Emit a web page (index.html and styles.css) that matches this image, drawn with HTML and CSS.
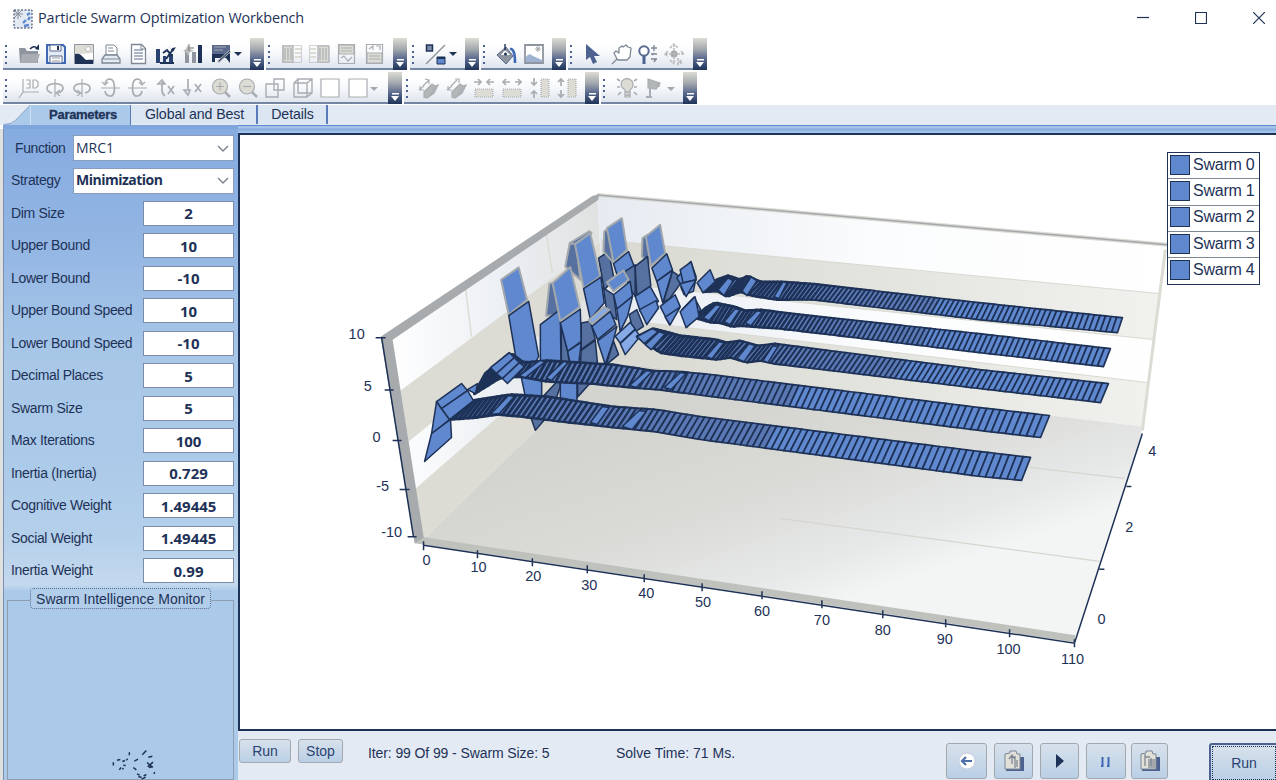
FILE: index.html
```html
<!DOCTYPE html>
<html lang="en">
<head>
<meta charset="utf-8">
<title>Particle Swarm Optimization Workbench</title>
<link rel="stylesheet" href="styles.css">
</head>
<body>
<div class="window">
  <header class="titlebar">
    <svg class="app-icon" viewBox="0 0 20 20"><rect x="1" y="1" width="18" height="18" fill="#e3eaf4" stroke="#1e3257" stroke-dasharray="2 1.5"/><path d="M5 1v9M1 5h9M2 2l6 6M8 2L2 8" stroke="#8a9098"/><path d="M10 14l3-3M14 6l3-2M11 17l5-1M15 11l2-3" stroke="#5f88cf" stroke-width="2.4"/></svg>
    <h1>Particle Swarm Optimization Workbench</h1>
    <div class="window-buttons">
      <svg viewBox="0 0 12 12"><path d="M0 5.5h12"/></svg>
      <svg viewBox="0 0 12 12"><path d="M.5.5h11v11H.5z"/></svg>
      <svg viewBox="0 0 12 12"><path d="M0 0l12 12M12 0L0 12"/></svg>
    </div>
  </header>

  <div class="toolbars">
    <div class="toolbar-row">
      <div class="strip s-file"><i class="grip"></i>
        <svg viewBox="0 0 22 22"><path d="M0 4h6l2 3h11v12H1z" fill="#8e959e"/><path d="M3 10h18l-3 9H1z" fill="#a9adb2"/><path d="M11 5q4-4 7-1" fill="none" stroke="#1e3257" stroke-width="1.6"/><path d="M16 5l4 1V0z" fill="#1e3257"/></svg>
        <svg viewBox="0 0 22 22"><path d="M1 1h16l2 2v16H1z" fill="#e3eaf4" stroke="#3f68b4" stroke-width="2"/><path d="M4 1h11v6H4zM4 12h12v7H4z" fill="#fff" stroke="#5a6a8f"/><path d="M6 14h8M6 17h8" stroke="#8e959e"/><path d="M11 2h2v4h-2z" fill="#1e3257"/></svg>
        <svg viewBox="0 0 22 22"><path d="M.5.5h19v19H.5z" fill="#dcdcd4" stroke="#8e959e"/><path d="M1 10q6-1 10 5l8 1v4H1z" fill="#1e3257"/><path d="M6 10l6 6 7-1V9z" fill="#fff"/><circle cx="14" cy="5" r="2.5" fill="#fff" stroke="#bbb"/></svg>
        <svg viewBox="0 0 22 22"><path d="M5 1h8l3 3v7H5z" fill="#fff" stroke="#7e8794"/><path d="M7 4h5M7 7h6" stroke="#7e8794"/><path d="M4 11h12l3 4v4H1v-4z" fill="#e3eaf4" stroke="#7e8794" stroke-width="1.3"/><path d="M2 15h16" stroke="#7e8794"/></svg>
        <svg viewBox="0 0 22 22"><path d="M2.500.5h10l4 4v15h-14z" fill="#fff" stroke="#7e8794" stroke-width="1.3"/><path d="M5 6h9M5 9h9M5 12h9M5 15h9" stroke="#5a6a8f"/><path d="M12 1v4h4" fill="none" stroke="#7e8794"/></svg>
        <svg viewBox="0 0 22 22"><path d="M0 5h4v14H0zM7 12h3v7H7zM13 10h4v9h-4z" fill="#2b4372"/><path d="M7 9l4-3 5 6M10 15l8-11M4 19h14" stroke="#1e3257" stroke-width="2" fill="none"/><path d="M12 1l3 4 5-2-3 5" fill="#1e3257"/></svg>
        <svg viewBox="0 0 22 22"><path d="M1 6h4v13H1zM8 8h4v11H8z" fill="#8e959e"/><path d="M14 1h4v18h-4z" fill="#1e3257"/><path d="M4 1l2 4 4 2-4 1-2 4-2-4-3-1 3-2z" fill="#b9bbb8"/><path d="M5 4h5M5 0v7" stroke="#777"/></svg>
        <svg viewBox="0 0 22 22"><path d="M0 1h18v10H0z" fill="#5a6a8f"/><path d="M2 3h12M2 6h9" stroke="#a3a8ad"/><path d="M0 10h18v9l-4-5H3v4H0z" fill="#1e3257"/><path d="M6 18L18 7" stroke="#a3a8ad" stroke-width="2.6"/><path d="M7 17L18 7" stroke="#1e3257"/></svg>
        <b class="caret"></b><i class="cap"></i></div>
      <div class="strip s-align"><i class="grip"></i>
        <svg class="dim" viewBox="0 0 22 22"><path d="M.5 1.500h19v17H.5z" stroke-dasharray="1 1"/><path class="f" d="M1 2h10v16H1z"/><path d="M3 4v12M6 4v12M9 4v12"/><path class="p" d="M13 5h6M13 9h6M13 13h6"/></svg>
        <svg class="dim" viewBox="0 0 22 22"><path d="M.5 1.500h19v17H.5z" stroke-dasharray="1 1"/><path class="f" d="M9 2h11v16H9z"/><path d="M11 4v12M14 4v12M17 4v12"/><path class="p" d="M1 5h6M1 9h6M1 13h6"/></svg>
        <svg class="dim" viewBox="0 0 22 22"><path d="M1.500.5h16v19h-16z"/><path class="f" d="M2 1h15v9H2z"/><path d="M4 4h11M4 7h11M4 14l3-2 4 5 4-4"/></svg>
        <svg class="dim" viewBox="0 0 22 22"><path d="M1.500.5h16v19h-16z"/><path class="f" d="M2 9h15v10H2z"/><path d="M4 12h11M4 15h11M4 5l4-3v4M11 2h4v4"/></svg>
        <i class="cap"></i></div>
      <div class="strip s-swap"><i class="grip"></i>
        <svg viewBox="0 0 22 22"><path d="M1.500 1h6v6h-6z" fill="#7f8da9" stroke="#1e3257" stroke-width="1.500"/><path d="M1 20L20 1" stroke="#8e959e" stroke-width="1.400"/><path d="M12 13h8v7h-8z" fill="#5f88cf" stroke="#1e3257"/><path d="M12 14h8" stroke="#1e3257" stroke-width="2"/></svg>
        <b class="caret"></b><i class="cap"></i></div>
      <div class="strip s-fill"><i class="grip"></i>
        <svg viewBox="0 0 22 22"><path d="M1 11l9-8 7 9-7 8z" fill="#8e959e" stroke="#5a6a8f"/><path d="M9 0v10" stroke="#1e3257" stroke-width="1.400"/><path d="M5 11l4-5 5 5z" fill="#fff"/><path d="M14 5q5-1 5 14" stroke="#3f68b4" stroke-width="2.600" fill="none"/><circle cx="9.500" cy="10" r="1.500" fill="#1e3257"/></svg>
        <svg viewBox="0 0 22 22"><path d="M1 1h18v18H1z" fill="#fff" stroke="#8e959e" stroke-width="1.800"/><path d="M2 13q3-5 7-1l9 4v2H2z" fill="#9fb2d2"/><path d="M11 5h6M14 2v6M12 3l4 4M16 3l-4 4" stroke="#a3a8ad"/></svg>
        <i class="cap"></i></div>
      <div class="strip s-point"><i class="grip"></i>
        <svg viewBox="0 0 22 22"><path d="M1 0v16l4-3 3 7 4-2-3-6h6z" fill="#4d6291"/></svg>
        <svg viewBox="0 0 22 22"><path d="M0 20l5-5-3-6 2-2 3 2V4l3-2 1 1 3-2 2 2 3 1-1 9-3 3H6l-2-2" fill="#fff" stroke="#7e8794" stroke-width="1.300" stroke-linejoin="round"/></svg>
        <svg viewBox="0 0 22 22"><circle cx="6" cy="7" r="4.700" fill="#fff" stroke="#5a6a8f" stroke-width="2"/><path d="M6 12v8" stroke="#4d6291" stroke-width="3"/><path d="M13 4h6M16 1v6M13 10h6M13 15h6M16 9l-2 2M16 18l2-3" stroke="#7e8794" stroke-width="1.400"/></svg>
        <svg viewBox="0 0 22 22"><circle cx="9" cy="10" r="3.500" fill="#a3a8ad"/><path d="M9 0v20M0 10h20M5 4l4-4 4 4M5 16l4 4M3 7l-3 3 3 3M16 7l3 3M13 14v6l3-4v4" stroke="#b9bbb8" stroke-width="1.500" fill="none" stroke-dasharray="3 1"/></svg>
        <i class="cap"></i></div>
    </div>
    <div class="toolbar-row">
      <div class="strip s-view"><i class="grip"></i>
        <svg class="dim" viewBox="0 0 22 22"><path d="M4 1v13L0 20M4 14h16M7 2h4v8H7M8 6h3M14 2h3l2 2v4l-2 2h-3z"/></svg>
        <svg class="dim" viewBox="0 0 22 22"><path d="M6 15q-5-1-5-5 0-4 8-4.500 8 .5 8 4.500 0 4-6 5" stroke-width="1.700"/><path d="M9 1v18M14 12l-4 3 4 3"/></svg>
        <svg class="dim" viewBox="0 0 22 22"><path d="M12 15q5-1 5-5 0-4-8-4.500-8 .5-8 4.500 0 4 6 5" stroke-width="1.700"/><path d="M9 1v18M4 12l4 3-4 3"/></svg>
        <svg class="dim" viewBox="0 0 22 22"><path d="M4 6q1-5 5-5 4.500.5 4.500 9T9 18q-4 0-5-5" stroke-width="1.700"/><path d="M0 10h19M1 4l3 3 3-3"/></svg>
        <svg class="dim" viewBox="0 0 22 22"><path d="M14 6q-1-5-5-5-4.500.5-4.500 9T9 18q4 0 5-5" stroke-width="1.700"/><path d="M0 10h19M11 4l3 3 3-3"/></svg>
        <svg class="dim" viewBox="0 0 22 22"><path d="M6 4v8q0 4 3 6M2 6l4-4 3 4zM12 8l6 8M18 8l-6 8" stroke-width="1.700"/></svg>
        <svg class="dim" viewBox="0 0 22 22"><path d="M5 1v12M1 12l4 5 2-5zM12 6l6 8M18 6l-6 8" stroke-width="1.700"/></svg>
        <svg class="dim" viewBox="0 0 22 22"><circle class="f" cx="9" cy="8.500" r="7.500"/><path d="M5 8.500h8M9 4.500v8"/><path d="M14 14l5 5" stroke-width="2.500"/></svg>
        <svg class="dim" viewBox="0 0 22 22"><circle class="f" cx="9" cy="8.500" r="7.500"/><path d="M5 8.500h8"/><path d="M14 14l5 5" stroke-width="2.500"/></svg>
        <svg class="dim" viewBox="0 0 22 22"><path d="M9 1h10v11H9zM1 6h12v13H1z" stroke-width="1.400"/></svg>
        <svg class="dim" viewBox="0 0 22 22"><path d="M1 5h13v14H1zM5 1h14v14H5zM1 5l4-4M14 5l5-4M14 19l5-4" stroke-width="1.400"/></svg>
        <svg class="dim" viewBox="0 0 22 22"><path d="M1 1h18v18H1z" fill="#fff"/></svg>
        <svg class="dim" viewBox="0 0 22 22"><path d="M1 1h18v18H1z" fill="#fff"/></svg>
        <b class="caret faint"></b><i class="cap"></i></div>
      <div class="strip s-size"><i class="grip"></i>
        <svg class="dim" viewBox="0 0 22 22"><path class="g" d="M5 14l8-8 3 2 3-1-4 8-7 5-3-1z"/><path d="M0 12l5-4M4 8l6-6M6 1l4 1v4M1 8v4h4M16 9l-5 8"/></svg>
        <svg class="dim" viewBox="0 0 22 22"><path class="g" d="M5 14l8-8 3 2 3-1-4 8-7 5-3-1z"/><path d="M0 12l5-4M4 8l6-6M8 1h4v4M1 8v4h4M16 9l-5 8"/></svg>
        <svg class="dim" viewBox="0 0 22 22"><path class="f" d="M1 11h18v8H1z" stroke-dasharray="1 1"/><path d="M0 4h7M4 1l3 3-3 3M20 4h-7M16 1l-3 3 3 3" stroke-width="1.700"/></svg>
        <svg class="dim" viewBox="0 0 22 22"><path class="f" d="M1 11h18v8H1z" stroke-dasharray="1 1"/><path d="M1 4h7M4 1L1 4l3 3M20 4h-7M16 1l3 3-3 3" stroke-width="1.700"/></svg>
        <svg class="dim" viewBox="0 0 22 22"><path class="f" d="M11 1h8v18h-8z" stroke-dasharray="1 1"/><path d="M4 0v7M1 4l3 3 3-3M4 20v-7M1 16l3-3 3 3" stroke-width="1.700"/></svg>
        <svg class="dim" viewBox="0 0 22 22"><path class="f" d="M11 1h8v18h-8z" stroke-dasharray="1 1"/><path d="M4 1v7M1 4l3-3 3 3M4 19v-7M1 16l3 3 3-3" stroke-width="1.700"/></svg>
        <i class="cap"></i></div>
      <div class="strip s-light"><i class="grip"></i>
        <svg class="dim" viewBox="0 0 22 22"><path class="f" d="M5 3q5-5 10 0 3 5-2 9v7H8v-7Q2 8 5 3z"/><path d="M8 14h5M8 17h5M0 1l3 2M0 9h3M1 17l3-3M20 1l-3 2M20 9h-3M20 17l-3-3" stroke-width="1.600"/></svg>
        <svg class="dim" viewBox="0 0 22 22"><path class="g" d="M4 1l12 4-4 6-8-1z"/><path d="M6 11v8M2 19h6M14 5l1 4" stroke-width="2"/></svg>
        <b class="caret faint"></b><i class="cap"></i></div>
    </div>
  </div>

  <nav class="tabs">
    <svg class="tab-slope" viewBox="0 0 28 21"><path d="M0 21L10 19 28 0V21z" fill="#abcae9"/><path d="M0 20.500q8 0 12-4L28 0" fill="none" stroke="#7e9cc8"/></svg>
    <span class="tab active">Parameters</span>
    <span class="tab global">Global and Best</span>
    <span class="tab details">Details</span>
  </nav>
  <div class="tab-rule"></div>

  <main class="body">
    <aside class="sidebar">
      <div class="field combo"><label class="in">Function</label><div class="select">MRC1<svg viewBox="0 0 12 8"><path d="M1 1l5 5 5-5"/></svg></div></div>
      <div class="field combo"><label>Strategy</label><div class="select strong">Minimization<svg viewBox="0 0 12 8"><path d="M1 1l5 5 5-5"/></svg></div></div>
      <div class="field"><label>Dim Size</label><output>2</output></div>
      <div class="field"><label>Upper Bound</label><output>10</output></div>
      <div class="field"><label>Lower Bound</label><output>-10</output></div>
      <div class="field"><label>Upper Bound Speed</label><output>10</output></div>
      <div class="field"><label>Lower Bound Speed</label><output>-10</output></div>
      <div class="field"><label>Decimal Places</label><output>5</output></div>
      <div class="field"><label>Swarm Size</label><output>5</output></div>
      <div class="field"><label>Max Iterations</label><output>100</output></div>
      <div class="field"><label>Inertia (Inertia)</label><output>0.729</output></div>
      <div class="field"><label>Cognitive Weight</label><output>1.49445</output></div>
      <div class="field"><label>Social Weight</label><output>1.49445</output></div>
      <div class="field"><label>Inertia Weight</label><output>0.99</output></div>
      <section class="monitor">
        <h2>Swarm Intelligence Monitor</h2>
        <svg class="particles" viewBox="335 505 135 95"><path d="M339 547v10M350 541l10-2M357 570l5-7M366 545l8-3M369 556l7 1M378 541l4-4M387 517v9M402 544l11-6M399 563l9 7M426 525l12-13M444 532l12-3M440 548l16 14M442 561l16-14M446 563l12-2M410 582l8 4M414 590l10 3M430 588l8-4M424 598l12-6M460 582l4-5M366 568l4-3"/></svg>
      </section>
    </aside>

    <div class="content">
      <div class="chart-panel">
        <svg id="chart" class="chart" viewBox="240 135 1036 595">
          <defs>
            <linearGradient id="left" x1="0" x2="1"><stop offset="0" stop-color="#fff"/><stop offset=".5" stop-color="#edf0f4"/><stop offset="1" stop-color="#dfe1e0"/></linearGradient>
            <linearGradient id="back" x1="0" x2="1"><stop offset="0" stop-color="#e6ebf1"/><stop offset=".5" stop-color="#fbfcfd"/><stop offset="1" stop-color="#fff"/></linearGradient>
            <linearGradient id="backbeige" x1="0" x2="1"><stop offset="0" stop-color="#d9d9d2"/><stop offset=".5" stop-color="#e4e4df"/><stop offset="1" stop-color="#f1f1ee"/></linearGradient>
            <linearGradient id="floor" gradientUnits="userSpaceOnUse" x1="700" y1="400" x2="775" y2="625"><stop offset="0" stop-color="#d3d4cf"/><stop offset=".45" stop-color="#dadbd7"/><stop offset=".8" stop-color="#e6e8e8"/><stop offset="1" stop-color="#f3f4f4"/></linearGradient>
          </defs>
          <path d="M385 335L597 195 606 362 423 540z" fill="url(#left)"/>
          <path d="M400 391L601 242 602 285 408 442zM415 489L604 325 606 362 423 540z" fill="#dcdcd4"/>
          <path d="M465 288l6 49M546 234l6 39" stroke="#dcdcd4" stroke-width="1.500"/>
          <path d="M597 195L1167 246 1143 430 606 362z" fill="url(#back)"/>
          <path d="M601 240L1162 294 1155 340 602 282zM604 318L1148 383 1143 427 606 362z" fill="url(#backbeige)"/>
          <path d="M601 240L1162 294M602 282L1155 340M604 318L1148 383" fill="none" stroke="#d9d9d2"/>
          <path d="M423 540L606 362 1143 427 1141 440 1076 640z" fill="url(#floor)"/>
          <path d="M1030 468l95 11M780 519L1100 562" stroke="#d6d6cf" stroke-width="1.300"/>
          <path d="M1166 250L1143 431" stroke="#dcdcd4" stroke-width="3"/>
          <path d="M597 195L1168 245" stroke="#dcdcd4" stroke-width="4"/><path d="M597 195L1168 245" stroke="#a3a8ad" stroke-width="1.500"/>
          <path d="M380 337L592 196 599 194 598 200 392 340 423 537 424 543 414 544z" fill="#a7abae"/>
          <path d="M414 544L424 538 1076 636 1075 643z" fill="#bfc1bd"/>
          <g id="peaks" class="peaks"></g>
          <g id="ribbons"></g>
          <path class="axis" d="M381 338L413 538M423 546L1075 644 1143 434M375 338h10M384 390.500h9M392 441h9M399 490h10M407 537.500h9M423 542v9M477 551v8M532 559v8M587 566v8M644 575v8M702 584v8M762 592v8M822 601v8M883 611v8M946 620v8M1010 630v8M1075 640v8M1127 487h5M1100 570h5"/>
          <g class="ticks">
            <text x="356" y="339">10</text><text x="367" y="391">5</text><text x="376" y="443">0</text><text x="382" y="492">-5</text><text x="391" y="538">-10</text>
            <text x="426" y="566">0</text><text x="478" y="573">10</text><text x="533" y="582">20</text><text x="589" y="591">30</text><text x="646" y="599">40</text><text x="703" y="608">50</text><text x="762" y="617">60</text><text x="822" y="626">70</text><text x="883" y="636">80</text><text x="945" y="645">90</text><text x="1009" y="655">100</text><text x="1073" y="665">110</text>
            <text x="1102" y="625">0</text><text x="1130" y="533">2</text><text x="1153" y="457">4</text>
          </g>
        </svg>
        <ul class="legend"><li>Swarm 0</li><li>Swarm 1</li><li>Swarm 2</li><li>Swarm 3</li><li>Swarm 4</li></ul>
      </div>
      <footer class="status">
        <button class="btn run">Run</button><button class="btn stop">Stop</button>
        <span class="iter">Iter: 99 Of 99 - Swarm Size: 5</span><span class="time">Solve Time: 71 Ms.</span>
        <div class="transport">
          <button class="btn b1"><svg viewBox="0 0 22 22"><circle cx="11" cy="11" r="8" fill="#fff" stroke="#c6cfdd"/><path d="M6 11h10M10 7l-4 4 4 4" stroke="#4d6fa8" stroke-width="2.200" fill="none"/></svg></button>
          <button class="btn b2"><svg viewBox="0 0 22 22"><path d="M7 7h14v14H3v-3z" fill="#4d6291"/><path d="M2 4l5-1V1h6l1 3h3v15H2z" fill="#e1e1da" stroke="#7e8794"/><path d="M6 9l3-4 3 4M9 5v9M12 6v12M14 10v7" stroke="#7e8794" fill="none" stroke-width="1.300"/></svg></button>
          <button class="btn b3"><svg viewBox="0 0 22 22"><path d="M7 4l8 7-8 7z" fill="#1e3257"/></svg></button>
          <button class="btn b4"><svg viewBox="0 0 22 22"><path d="M7.500 7v9H6M13.500 7v9H12" stroke="#3f68b4" stroke-width="2" fill="none"/></svg></button>
          <button class="btn b5"><svg viewBox="0 0 22 22"><path d="M7 7h14v14H3v-3z" fill="#4d6291"/><path d="M2 4l5-1V1h6l1 3h3v15H2z" fill="#e1e1da" stroke="#7e8794"/><path d="M9 9h8v9H9z" fill="#a3a8ad"/><path d="M6 7h5M12 8v8M6 4v12" stroke="#7e8794" fill="none" stroke-width="1.300"/></svg></button>
        </div>
        <button class="btn main-run">Run</button>
      </footer>
    </div>
  </main>
</div>
<script src="chart.js"></script>
</body>
</html>
```

FILE: styles.css
```css
* { box-sizing: border-box; }
body { margin: 0; background: #fff; color: #1e3257; font-family: "Liberation Sans", Arial, sans-serif; font-size: 14px; overflow: hidden; }
.window { width: 1276px; height: 780px; overflow: hidden; display: flex; flex-direction: column; background: #fff; }

.titlebar { flex: 0 0 37px; display: flex; align-items: center; padding: 0 11px 2px 13px; }
.app-icon { width: 20px; height: 20px; margin-top: 2px; }
.titlebar h1 { margin: 0 0 0 5px; font: 400 14.4px "Open Sans", sans-serif; letter-spacing: -.13px; white-space: nowrap; }
.window-buttons { margin-left: auto; display: flex; gap: 46px; }
.window-buttons svg { width: 12px; height: 12px; fill: none; stroke: #1e3257; stroke-width: 1.2; }

.toolbars { flex: 0 0 68px; padding: 1px 0 0 3px; display: flex; flex-direction: column; gap: 2px; }
.toolbar-row { display: flex; gap: 2.3px; height: 32px; }
.strip { display: flex; align-items: flex-start; height: 32px; padding: 5.500px 0 0 2px; background: linear-gradient(#fff 0 20%, #f5f7fa 55%, #dfe5ee); border-bottom: 2px solid #7484a3; }
.strip svg { flex: 0 0 22px; width: 22px; height: 22px; margin-right: 5.6px; overflow: visible; }
.s-view svg { margin-right: 5.45px; }
.s-file { width: 261px; } .s-align { width: 141px; } .s-swap { width: 69px; } .s-fill { width: 85px; } .s-point { width: 138.500px; }
.s-view { width: 398.500px; } .s-size { width: 195px; } .s-light { width: 96px; }
.strip.s-point svg { margin-right: 4.600px; }
.grip { flex: 0 0 2px; width: 2px; height: 19px; margin: 1px 11.500px 0 0; background: repeating-linear-gradient(#4d6291 0 2px, transparent 2px 5.600px); }
.s-point .grip { margin-right: 13px; }
.caret { flex: none; width: 0; height: 0; margin: 8px 0 0 -5px; border: 4px solid transparent; border-top-color: #1e3257; border-bottom: 0; }
.s-swap .caret { margin-left: -4px; }
.s-view .caret, .s-light .caret { margin-left: -5px; margin-top: 9px; }
.caret.faint { border-top-color: #a3a8ad; }
.cap { flex: 0 0 14px; height: 32px; margin: -5.500px 0 0 auto; background: linear-gradient(#fff, #fff) 4px 21px / 7px 1.500px no-repeat, linear-gradient(#dcdcd4, #a3a8ad 35%, #5a6a8f 65%, #1e3257); display: flex; justify-content: center; padding-top: 24px; }
.cap::after { content: ""; width: 0; height: 0; border: 4px solid transparent; border-top: 5px solid #fff; border-bottom: 0; }
.dim { fill: none; stroke: #a9adb2; stroke-width: 1.2; }
.dim .f { fill: #dcdcd4; } .dim .g { fill: #b4b7b8; } .dim .p { stroke: #dcdcd4; stroke-width: 2; }

.tabs { flex: 0 0 20px; display: flex; padding-left: 3px; background: #e3eaf4; }
.tab-slope { width: 28px; height: 20px; flex: none; }
.tab { display: flex; align-items: center; justify-content: center; height: 19px; font-size: 14.200px; letter-spacing: -.12px; padding-bottom: 1px; background: #dbe6f2; border-right: 2px solid #5a7bb8; white-space: nowrap; }
.tab.active { width: 100px; height: 20px; background: #abcae9; font-weight: 700; font-size: 13px; letter-spacing: -.3px; -webkit-text-stroke: .3px #1e3257; padding-left: 5px; border-right-width: 1px; }
.tab.global { width: 127px; padding-left: 2px; } .tab.details { width: 70px; padding-left: 1px; }
.tab-rule { flex: 0 0 8px; background: linear-gradient(90deg, #7fa6dc 0 235px, transparent 235px), linear-gradient(#5f88cf 0 1px, #a3c3e8 1px 3px, #86aae0 4px, #abcae9); margin-left: 3px; }

.body { flex: 1; min-height: 0; display: flex; }
.sidebar { width: 238px; flex: none; display: flex; flex-direction: column; margin-left: 0; padding: 0 5px 0 6px; border-left: 3px solid #dfe1e0; background: linear-gradient(#85abe0, #93b6e3 18%, #a9c8e8 36%, #abcae9 50%, #b3cfea 62%, #c4d9ee 70%, #abcae9 71%); box-shadow: inset 1px 0 #7e8fae; margin-top: -4px; padding-top: 2.800px; }
.field { flex: 0 0 32.540px; display: flex; align-items: center; justify-content: space-between; white-space: nowrap; }
.field label { padding-left: 2px; letter-spacing: -.33px; position: relative; top: -.5px; }
.field label.in { padding-left: 6px; letter-spacing: -.4px; }
.field output { width: 91px; height: 25px; margin-right: -1px; display: flex; align-items: center; justify-content: center; background: #fff; border: 1.500px solid #7b8ba8; font: 700 15px "Open Sans", sans-serif; }
.select { width: 161px; height: 26px; margin-right: -1px; display: flex; align-items: center; justify-content: space-between; padding: 0 4px 2px 2px; background: #fff; border: 1.500px solid #8a9cbc; font: 400 14px "Open Sans", sans-serif; }
.select.strong { font-weight: 700; letter-spacing: -.5px; }
.select svg { width: 12px; height: 8px; margin-top: 3px; fill: none; stroke: #7e8794; stroke-width: 1.500; }
.monitor { flex: none; width: 227px; height: 180px; margin: 13px 0 0 -2px; border: 1px solid #8f9db0; background: #abcae9; position: relative; }
.monitor h2 { margin: -13px 0 0 22px; width: 181px; height: 21px; display: flex; align-items: center; justify-content: center; border: 1.500px dotted #5a6a8f; border-radius: 4px; background: #b1cdea; font-size: 14px; font-weight: 400; white-space: nowrap; }
.particles { position: absolute; left: 104px; top: 147px; width: 45px; height: 32px; fill: none; stroke: #1e3257; stroke-width: 4.500; }

.content { flex: 1; min-width: 0; display: flex; flex-direction: column; }
.chart-panel { flex: 0 0 598px; position: relative; background: #fff; border: 2px solid #1e3257; border-right: 0; }
.chart { display: block; width: 1036px; height: 594px; }
.axis { fill: none; stroke: #1e3257; stroke-width: 1.500; }
.ticks text { font: 14.500px "Liberation Sans", Arial, sans-serif; fill: #1e3257; text-anchor: middle; }
.peaks { stroke: #1e3257; stroke-width: 4.500; stroke-linejoin: round; fill: #5f88cf; }
.peaks .rim { stroke: #a3a8ad; stroke-width: 6; }
.peaks .shade { fill: #56719f; }
.slice { fill: #5f88cf; stroke: #1e3257; stroke-width: 1.500; stroke-linejoin: round; }
.thin { fill: #5a78b4; }
.shine { fill: #86aae6; stroke: #1e3257; }
.legend { position: absolute; left: 927px; top: 17px; width: 93px; height: 133px; margin: 0; padding: 0; list-style: none; border: 1.500px solid #1e3257; background: #fff; }
.legend li { height: 26.300px; display: flex; align-items: center; gap: 3px; padding: 0 0 2px 2px; font-size: 16px; letter-spacing: -.25px; border-bottom: 1px solid #7e8794; }
.legend li:last-child { border: 0; }
.legend li::before { content: ""; width: 18px; height: 18px; background: #5f88cf; border: 1.500px solid #1e3257; }

.status { flex: 1; display: flex; align-items: flex-start; padding: 8px 0 0 1px; background: #e3eaf4; }
.btn { display: flex; align-items: center; justify-content: center; padding: 0; color: #2b4372; font: 14px "Liberation Sans", Arial, sans-serif; background: linear-gradient(#d8e1eb, #b9cfe6); border: 1.500px solid #a3a8ad; border-radius: 3px; }
.run { width: 52px; height: 24px; } .stop { width: 45px; height: 24px; margin-left: 7px; }
.iter { width: 248px; margin: 6px 0 0 25px; letter-spacing: -.1px; } .time { margin-top: 6px; width: 200px; }
.transport { display: flex; flex: none; margin: 4px 0 0 130px; }
.transport .btn { height: 36px; } .transport svg { width: 22px; height: 22px; }
.b1 { width: 41px; } .b2 { width: 39px; margin-left: 7px; } .b3 { width: 39px; margin-left: 7px; } .b4 { width: 40px; margin-left: 7px; } .b5 { width: 37px; margin-left: 5px; }
.main-run { flex: none; width: 70px; height: 40px; margin: 4px 0 0 41px; border: 2px solid #4d6291; outline: 1px dotted #1e3257; outline-offset: -4px; }
.run, .stop, .iter, .time { flex: none; }
```

FILE: chart.js
```js
const NS = "http://www.w3.org/2000/svg";
function poly(parent, points, cls) {
  const p = document.createElementNS(NS, "polygon");
  p.setAttribute("points", points.map(q => Array.isArray(q) ? q.join(",") : q).join(" "));
  if (cls) p.setAttribute("class", cls);
  parent.appendChild(p);
  return p;
}

// Convergence spikes, back to front, on a 3x local grid.
const peaks = document.getElementById("peaks");
peaks.setAttribute("transform", "translate(480 200) scale(.3333)");
[
  ["shade rim", "487,115 502,105 515,195 485,170"],
  ["rim", "497,110 540,75 555,160 512,198"],
  ["", "515,205 560,162 577,210 530,245"],
  ["", "530,245 577,212 548,310"],
  ["shade", "577,215 592,225 602,250 570,295 550,308"],
  ["", "590,235 632,185 648,230 610,265"],
  ["", "602,262 648,233 640,275 612,285"],
  ["shade", "355,175 385,155 402,240 372,270"],
  ["shade rim", "372,95 385,85 400,190 370,155"],
  ["rim", "380,85 425,55 440,150 400,188"],
  ["", "400,192 445,155 462,200 415,240"],
  ["shade", "435,215 465,195 465,290 445,260"],
  ["shade", "465,200 502,170 512,258 470,288"],
  ["", "465,290 510,260 535,305 480,335"],
  ["", "478,330 528,303 535,325 500,375"],
  ["", "540,320 585,285 600,320 568,375"],
  ["", "555,352 600,322 570,376"],
  ["", "605,330 642,292 662,330 620,382"],
  ["shade rim", "268,132 288,130 300,240 255,200"],
  ["shade rim", "268,130 328,94 334,100 285,132"],
  ["rim", "284,133 330,100 360,230 310,265"],
  ["", "310,267 362,232 372,310 330,358"],
  ["shade", "370,265 400,285 410,360 380,340"],
  ["rim", "380,248 430,212 445,240 400,275"],
  ["", "400,285 450,245 457,290 410,328"],
  ["", "410,328 457,290 442,350 420,395"],
  ["shade", "447,345 470,330 490,380 460,400"],
  ["shade rim", "207,252 217,250 240,345 197,348"],
  ["", "180,375 232,335 240,345 242,492 180,490"],
  ["shade", "243,380 262,455 268,495 243,495"],
  ["rim", "217,250 270,202 298,322 240,364"],
  ["", "240,370 300,328 303,425 262,455"],
  ["", "262,455 303,428 295,495 270,495"],
  ["shade", "303,370 330,365 345,418 303,450"],
  ["shade", "303,452 345,422 352,495 300,495"],
  ["rim shine", "325,362 372,322 388,332 335,372"],
  ["", "335,380 390,335 407,375 352,420"],
  ["", "352,424 410,380 400,420 375,495"],
  ["shade", "400,425 415,465 378,495"],
  ["shine", "405,410 450,368 465,388 420,430"],
  ["shine", "420,432 465,390 480,410 435,465"],
  ["rim", "62,240 115,203 140,300 85,345"],
  ["", "85,348 145,305 175,470 155,510 110,495"],
  ["", "122,530 184,530 184,592 135,592"],
  ["shade", "187,592 236,540 240,560 225,605"],
  ["", "240,535 290,535 290,607 240,600"],
  ["shade", "292,540 335,545 292,592"],
  ["shade", "150,650 198,655 165,692"]
].forEach(([cls, pts]) => poly(peaks, pts.split(" "), cls));

// Each ribbon runs between a far edge and a near edge; dark is the outline weight at its start.
const ribbons = [
  { n: 88, dark: 3, far: [[717,280],[728,276],[740,280],[748,276],[760,282],[783,282],[813,284],[980,303],[1123,318]],
    near: [[703,292],[717,291],[727,297],[740,292],[752,296],[777,300],[813,300],[980,320],[1118,333]],
    shine: ["718,290 728,278 733,281 724,296","742,291 751,277 757,281 747,296","774,297 783,282 787,283 779,299"],
    extra: ["697,283 710,270 715,282 703,293","680,270 691,262 696,280 683,283","680,284 696,280 686,297"] },
  { n: 84, dark: 3, far: [[706,308],[715,303],[724,305],[735,307],[745,311],[760,310],[793,314],[980,334],[1111,349]],
    near: [[695,318],[712,323],[720,323],[732,327],[740,326],[752,327],[780,329],[980,353],[1104,367]],
    shine: ["703,318 716,305 721,306 709,321","724,322 735,309 740,310 730,325","745,323 757,311 762,312 751,326"],
    extra: ["680,312 695,297 699,317 686,328"] },
  { n: 92, dark: 3, far: [[653,329],[680,336],[717,340],[727,343],[740,341],[758,346],[775,344],[980,370],[1109,384]],
    near: [[637,337],[660,353],[680,356],[717,360],[730,358],[747,363],[760,361],[773,364],[980,389],[1101,403]],
    shine: ["637,337 652,329 658,332 644,344","645,345 659,332 665,334 651,350","706,357 719,342 724,343 712,359","737,359 749,344 755,346 744,362","763,361 773,346 778,347 768,363"],
    extra: [] },
  { n: 97, dark: 3.2, far: [[485,374],[510,353],[523,363],[547,361],[565,362],[613,365],[653,371],[680,372],[703,374],[980,408],[1050,416]],
    near: [[474,394],[500,378],[520,377],[547,382],[590,384],[630,388],[657,390],[680,393],[980,431],[1041,438]],
    shine: ["490,368 509,353 514,358 496,374","496,374 514,358 519,363 502,379","502,379 519,363 524,367 507,384","519,376 539,361 545,362 525,378","546,378 563,362 568,363 551,381","629,386 646,371 652,372 636,388","664,388 680,373 686,374 671,390"],
    extra: ["467,390 477,384 475,394"] },
  { n: 96, dark: 3, far: [[464,404],[473,401],[485,399],[510,395],[547,397],[613,407],[657,410],[700,417],[980,452],[1031,458]],
    near: [[449,420],[475,418],[497,415],[520,417],[560,422],[613,428],[653,432],[700,440],[980,477],[1022,481]],
    shine: ["490,415 508,396 514,397 499,414","590,423 602,407 609,408 597,425","622,427 639,411 646,412 632,430"],
    extra: ["424,462 431,434 450,420 451,438","431,434 436,402 441,409 449,420","436,402 461,384 467,391 441,409","441,409 467,391 473,401 449,420"] }
];

function yAt(edge, x) {
  let i = 1;
  while (i < edge.length - 1 && edge[i][0] < x) i++;
  const [x0, y0] = edge[i - 1], [x1, y1] = edge[i];
  return y0 + (y1 - y0) * (x - x0) / (x1 - x0);
}
function pointAt(edge, f) {
  const a = edge[0][0], b = edge[edge.length - 1][0];
  const x = a + (b - a) * f;
  return [x.toFixed(1), yAt(edge, x).toFixed(1)];
}

const layer = document.getElementById("ribbons");
ribbons.forEach(r => {
  // Slices widen and their outlines lighten along the ribbon.
  const at = k => { const t = k / r.n; return t * (0.78 + 0.22 * t); };
  for (let k = 0; k < r.n; k++) {
    const t = k / r.n;
    const s = poly(layer, [pointAt(r.far, at(k)), pointAt(r.far, at(k + 1)), pointAt(r.near, at(k + 1)), pointAt(r.near, at(k))], t < 0.6 ? "slice thin" : "slice");
    s.style.strokeWidth = (1.7 + (r.dark - 1.7) * Math.max(0, 1 - t * 2.2)).toFixed(2);
  }
  r.shine.forEach(p => poly(layer, p.split(" "), "slice"));
  r.extra.forEach(p => poly(layer, p.split(" "), "slice"));
});
```
